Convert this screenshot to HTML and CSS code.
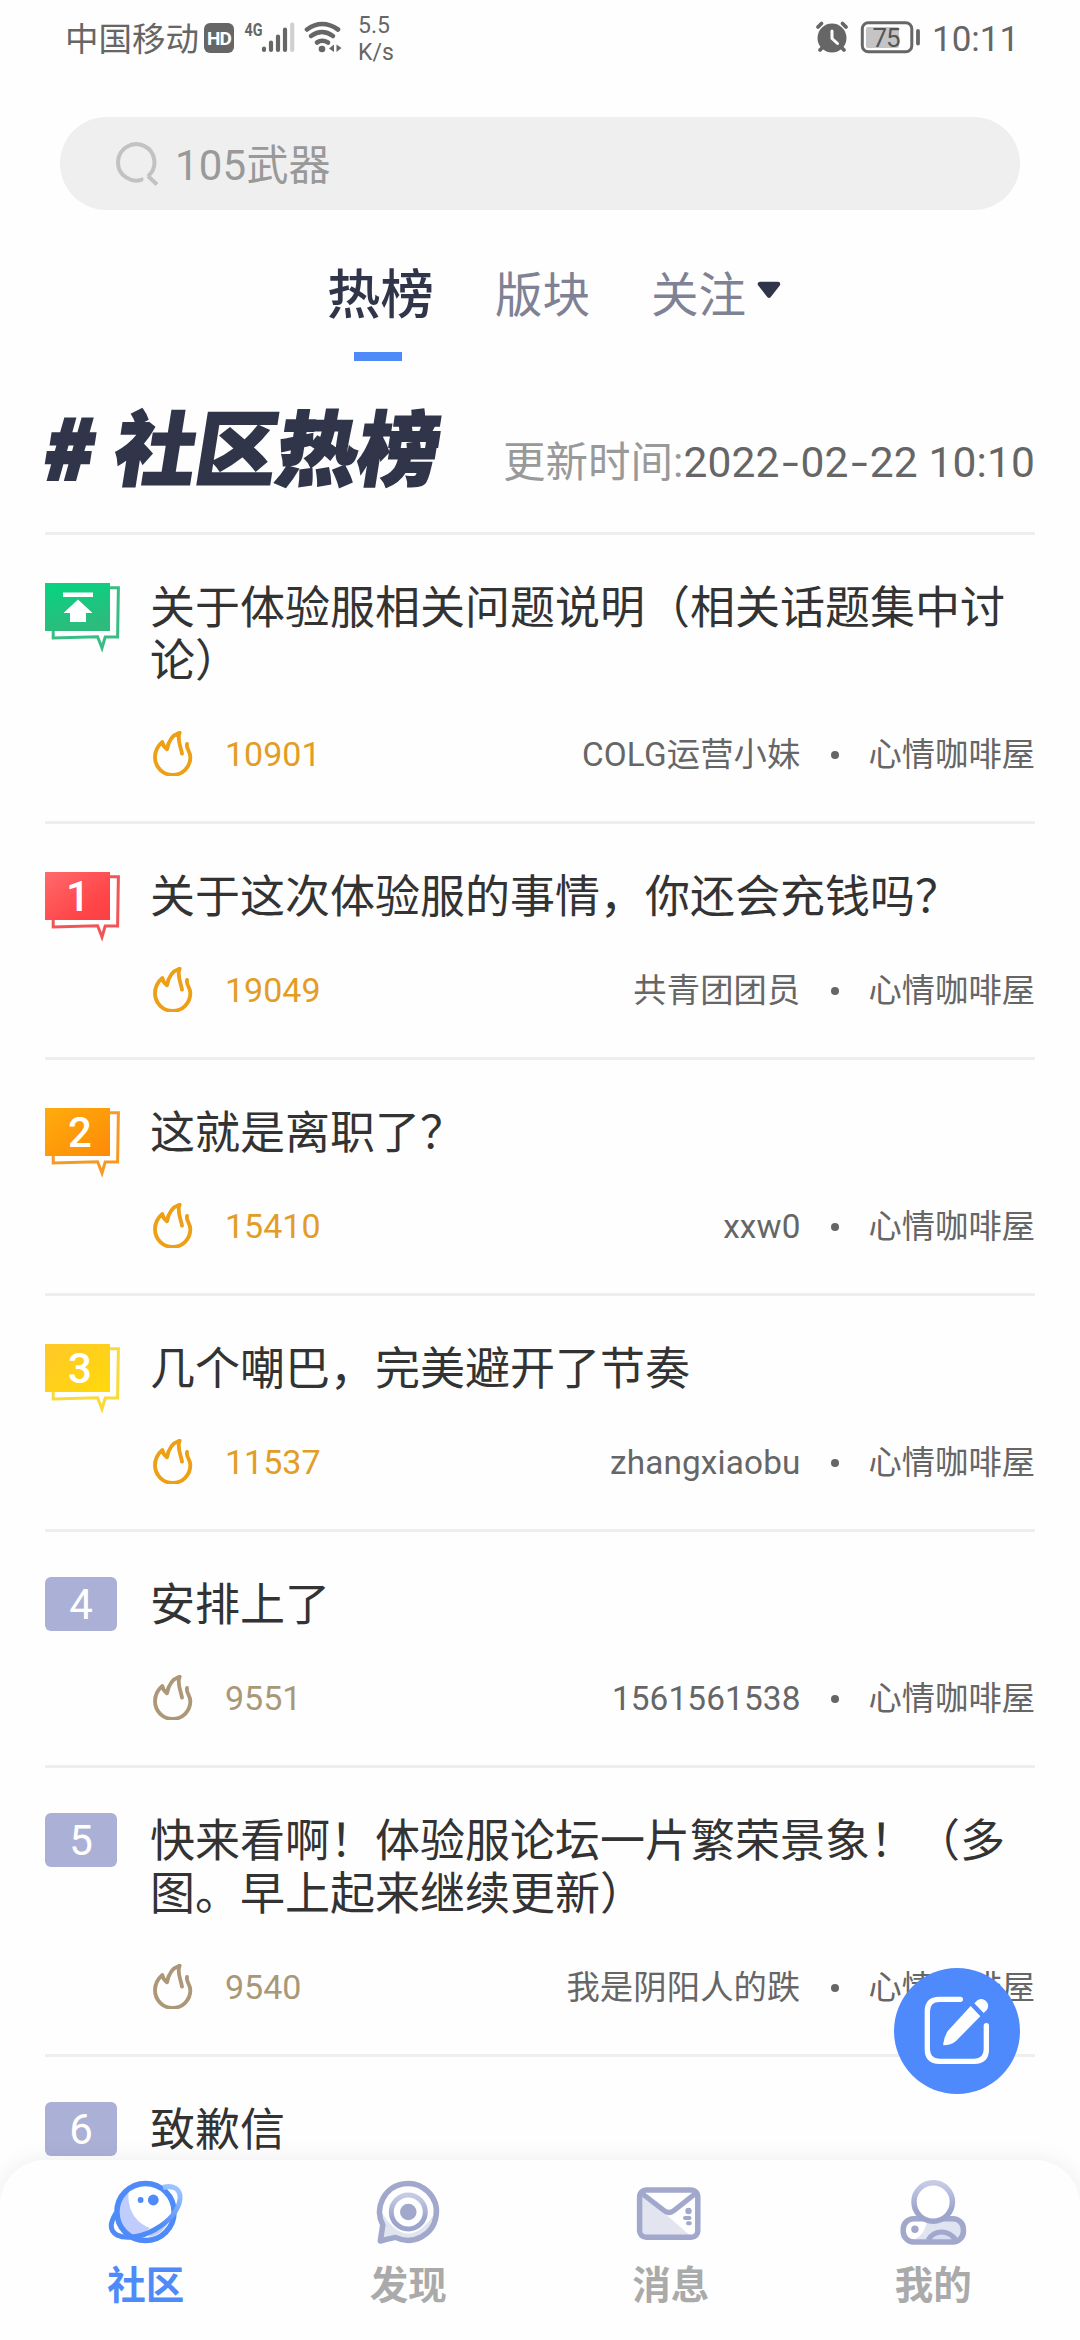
FILE: index.html
```html
<!DOCTYPE html>
<html lang="zh-CN">
<head>
<meta charset="utf-8">
<title>社区热榜</title>
<link rel="stylesheet" href="styles.css">
</head>
<body>
<svg class="defs" width="0" height="0" aria-hidden="true">
  <symbol id="flame" viewBox="393 93 135 135">
    <path d="M501 132 C498 148 511 152 511 172 A53 53 0 0 1 405 172 C405 152 413 138 427 126 C428 136 433 141 441 148 C445 125 457 105 479 98 C470 118 482 138 486 161" fill="none" stroke="currentColor" stroke-width="11.5" stroke-linecap="round" stroke-linejoin="round"/>
  </symbol>
  <symbol id="bubble" viewBox="0 0 76 70">
    <path d="M65 4.8 H73.4 L72.6 54 H60.2 L57 65 L52.6 53.7 L8.2 55 V47" fill="none" stroke="currentColor" stroke-width="3"/>
  </symbol>
</svg>
<div class="screen">
  <header class="status">
    <div class="status-left">
      <span class="carrier">中国移动</span>
      <span class="hd">HD</span>
      <svg class="signal" width="52" height="36" viewBox="243 19 52 36">
        <text class="net" x="244.5" y="35.5" textLength="18" lengthAdjust="spacingAndGlyphs">4G</text>
        <g stroke="#666" stroke-width="4.2" stroke-linecap="round">
          <path d="M264 48.5V50M271 42.500V50M278 36.500V50M285 29.500V50"/>
          <path d="M292.200 24.500V50" stroke="#d0d0d0"/>
        </g>
      </svg>
      <svg class="wifi" width="40" height="36" viewBox="302 19 40 36">
        <g fill="none" stroke="#666" stroke-width="4.600" stroke-linecap="round">
          <path d="M307 29.500Q322 18.500 338 29.500"/>
          <path d="M311 36Q322 28 333 36"/>
          <path d="M317 42.500Q322 39 328 42.500"/>
        </g>
        <circle cx="322" cy="49" r="3.300" fill="#666"/>
        <path d="M334 44.500v7.500l-5-3.500zM336.500 44.500l5 3.500-5 4z" fill="#666"/>
      </svg>
      <span class="speed">5.5<br>K/s</span>
    </div>
    <div class="status-right">
      <svg width="36" height="34" viewBox="815 20 36 34">
        <circle cx="833" cy="38" r="14.500" fill="#666"/>
        <path d="M819 27l3.500-3.500M847 27l-3.500-3.500M821 50l4-4M845 50l-4-4" stroke="#666" stroke-width="3.800" stroke-linecap="round"/>
        <path d="M833 31V38.500L838.500 43.500" fill="none" stroke="#fff" stroke-width="3" stroke-linecap="round" stroke-linejoin="round"/>
      </svg>
      <svg class="battery" width="62" height="34" viewBox="861 20 62 34">
        <rect x="863.300" y="22.800" width="49.500" height="29" rx="6" fill="none" stroke="#666" stroke-width="3"/>
        <rect x="867" y="27" width="33" height="21" rx="2" fill="#c4c4c4"/>
        <path d="M919 31V43.500" stroke="#666" stroke-width="3.800" stroke-linecap="round"/>
        <text x="873.500" y="47" textLength="28" class="charge">75</text>
      </svg>
      <span class="clock">10:11</span>
    </div>
  </header>

  <div class="search">
    <svg width="44" height="46" viewBox="114 141 44 46" fill="none" stroke="#c2c2c2" stroke-width="4">
      <path d="M143.500 179A18.200 18.200 0 1 1 148 176.200" />
      <path d="M148 176L157 184.500"/>
      <path d="M143.500 182L147 178.500" stroke="#efefef" stroke-width="3"/>
    </svg>
    <span>105武器</span>
  </div>

  <nav class="tabs">
    <span class="tab tab-on">热榜</span>
    <span class="tab">版块</span>
    <span class="tab">关注</span>
    <svg class="caret" width="24" height="18" viewBox="0 0 24 18"><path d="M3 3H21L12 14.500Z" fill="#30354a" stroke="#30354a" stroke-width="4.500" stroke-linejoin="round"/></svg>
  </nav>

  <div class="headline">
    <h1><span class="hash">#</span><span class="words">社区热榜</span></h1>
    <p>更新时间:<b>2022<i>-</i>02<i>-</i>22 10:10</b></p>
  </div>

  <main class="list">
    <article class="item">
      <div class="rank">
        <svg class="flag green" width="76" height="70">
          <defs><linearGradient id="g0" x1="0" y1="0" x2="0.300" y2="1"><stop stop-color="#06d481"/><stop offset="1" stop-color="#2cbb7c"/></linearGradient></defs>
          <use href="#bubble"/><rect width="65" height="48" fill="url(#g0)"/>
          <path d="M18 9.500H48V14H18ZM33 16.500L47.500 30H41V39H25V30H18.500Z" fill="#fff"/>
        </svg>
      </div>
      <div class="body">
        <h2>关于体验服相关问题说明（相关话题集中讨论）</h2>
        <div class="meta"><svg class="flame"><use href="#flame"/></svg><span class="heat">10901</span><span class="author">COLG运营小妹</span><span class="dot"></span><span>心情咖啡屋</span></div>
      </div>
    </article>
    <article class="item">
      <div class="rank">
        <svg class="flag red" width="76" height="70">
          <defs><linearGradient id="g1" x1="0" y1="0" x2="1" y2="1"><stop stop-color="#ff6a6c"/><stop offset="0.700" stop-color="#ff4548"/><stop offset="1" stop-color="#fb4043"/></linearGradient></defs>
          <use href="#bubble"/><rect width="65" height="48" fill="url(#g1)"/><text x="33" y="39">1</text>
        </svg>
      </div>
      <div class="body">
        <h2>关于这次体验服的事情，你还会充钱吗？</h2>
        <div class="meta"><svg class="flame"><use href="#flame"/></svg><span class="heat">19049</span><span class="author">共青团团员</span><span class="dot"></span><span>心情咖啡屋</span></div>
      </div>
    </article>
    <article class="item">
      <div class="rank">
        <svg class="flag orange" width="76" height="70">
          <defs><linearGradient id="g2" x1="0" y1="0" x2="1" y2="1"><stop stop-color="#ffac0c"/><stop offset="1" stop-color="#fd8a08"/></linearGradient></defs>
          <use href="#bubble"/><rect width="65" height="48" fill="url(#g2)"/><text x="35" y="39">2</text>
        </svg>
      </div>
      <div class="body">
        <h2>这就是离职了？</h2>
        <div class="meta"><svg class="flame"><use href="#flame"/></svg><span class="heat">15410</span><span class="author">xxw0</span><span class="dot"></span><span>心情咖啡屋</span></div>
      </div>
    </article>
    <article class="item">
      <div class="rank">
        <svg class="flag yellow" width="76" height="70">
          <defs><linearGradient id="g3" x1="0" y1="0" x2="1" y2="1"><stop stop-color="#ffc829"/><stop offset="1" stop-color="#ffd90b"/></linearGradient></defs>
          <use href="#bubble"/><rect width="65" height="48" fill="url(#g3)"/><text x="35" y="39">3</text>
        </svg>
      </div>
      <div class="body">
        <h2>几个嘲巴，完美避开了节奏</h2>
        <div class="meta"><svg class="flame"><use href="#flame"/></svg><span class="heat">11537</span><span class="author">zhangxiaobu</span><span class="dot"></span><span>心情咖啡屋</span></div>
      </div>
    </article>
    <article class="item cool">
      <div class="rank"><span class="num">4</span></div>
      <div class="body">
        <h2>安排上了</h2>
        <div class="meta"><svg class="flame"><use href="#flame"/></svg><span class="heat">9551</span><span class="author">1561561538</span><span class="dot"></span><span>心情咖啡屋</span></div>
      </div>
    </article>
    <article class="item cool">
      <div class="rank"><span class="num">5</span></div>
      <div class="body">
        <h2>快来看啊！体验服论坛一片繁荣景象！（多图。早上起来继续更新）</h2>
        <div class="meta"><svg class="flame"><use href="#flame"/></svg><span class="heat">9540</span><span class="author">我是阴阳人的跌</span><span class="dot"></span><span>心情咖啡屋</span></div>
      </div>
    </article>
    <article class="item cool">
      <div class="rank"><span class="num">6</span></div>
      <div class="body"><h2>致歉信</h2></div>
    </article>
  </main>

  <button class="fab" aria-label="发帖">
    <svg width="126" height="126" viewBox="12 12 378 378">
      <path d="M211 106H148Q112 106 112 142V256Q112 292 148 292H253Q289 292 289 256V185" fill="none" stroke="#fff" stroke-width="16" stroke-linecap="round"/>
      <path d="M242 126L271 157L198 231Q182 244 161 244Q159 243 160 238Q163 216 174 200Z" fill="#fff"/>
      <path d="M253 118L263 109Q275 100 287 110Q300 123 291 137L281 147Z" fill="#fff"/>
    </svg>
  </button>

  <footer class="nav">
    <div class="nav-item nav-on">
      <svg width="80" height="72" viewBox="0 0 80 72" fill="none">
        <defs><linearGradient id="ring" x1="0.900" y1="0" x2="0.550" y2="0.700"><stop stop-color="#9cc4ff"/><stop offset="1" stop-color="#4f8bf8"/></linearGradient></defs>
        <circle cx="39.500" cy="36" r="28.600" fill="#fff"/>
        <path d="M22.500 15C21 34 30 47 44 52Q36 60 27 61C8 51 8 27 22.500 15Z" fill="#bfcdfd"/>
        <path d="M46 57Q57 52 63 45Q56 60 42 61Z" fill="#bfcdfd"/>
        <circle cx="39.500" cy="36" r="28.600" stroke="#4f8bf8" stroke-width="5.500"/>
        <path d="M57 11.500C66 9 75 12 74 23C72.500 35 62 46 49 53.500C36 61 20 63.500 11 59C3 54.500 4 47 10 37" stroke="url(#ring)" stroke-width="5"/>
        <circle cx="34.600" cy="24" r="2.900" fill="#4f8bf8"/><circle cx="47.300" cy="24" r="5.400" fill="#4f8bf8"/>
      </svg>
      <span>社区</span>
    </div>
    <div class="nav-item">
      <svg width="80" height="72" viewBox="0 0 80 72" fill="none">
        <defs><linearGradient id="lens" x1="0" y1="0" x2="0" y2="1"><stop stop-color="#c6cce6"/><stop offset="0.700" stop-color="#9da5cc"/></linearGradient></defs>
        <path d="M13 37Q39 78 66 37Q62 63 39 64L25 62L11 65L14 49Z" fill="#e0e4ee"/>
        <path d="M13.800 49A28.400 28.400 0 1 1 26.500 61.400Q18 63 11.300 65Z" stroke="#a1a8cc" stroke-width="5.500" stroke-linejoin="round"/>
        <circle cx="39.300" cy="36" r="17" fill="#fff" stroke="url(#lens)" stroke-width="5"/>
        <circle cx="39.300" cy="36" r="8.300" fill="#a1a8cc"/>
      </svg>
      <span>发现</span>
    </div>
    <div class="nav-item">
      <svg width="80" height="72" viewBox="0 0 80 72" fill="none">
        <path d="M9 16L62 62H9Z" fill="#e2e5f0"/>
        <rect x="8.600" y="14" width="58.200" height="47.200" rx="6.500" stroke="#a1a8cc" stroke-width="5.500"/>
        <path d="M12 18L33 34.500Q38 38.500 43 34.500L63.500 18Z" fill="#fff"/>
        <path d="M11 17.500L33 34.500Q38 38.500 43 34.500L64.500 17.500" stroke="#a1a8cc" stroke-width="5.200"/>
        <circle cx="57.500" cy="35" r="3.200" fill="#a1a8cc"/>
        <path d="M54 42H58.500M57 47.200H58.800" stroke="#a1a8cc" stroke-width="4" stroke-linecap="round"/>
      </svg>
      <span>消息</span>
    </div>
    <div class="nav-item">
      <svg width="80" height="72" viewBox="0 0 80 72" fill="none">
        <rect x="9.200" y="42.700" width="60.200" height="23.300" rx="10.500" fill="#e0e4f0"/>
        <path d="M20 43H33Q32 58 20 64Q10 64 10 54T20 43Z" fill="#fff"/>
        <path d="M34 64Q39 56 47.500 56T62 64" fill="#d6dcf2" stroke="#a1a8cc" stroke-width="5"/>
        <rect x="9.200" y="42.700" width="60.200" height="23.300" rx="10.500" stroke="#a1a8cc" stroke-width="5.500"/>
        <circle cx="39.200" cy="26" r="19.200" fill="#fff" stroke="url(#lens)" stroke-width="5.500"/>
        <circle cx="20.900" cy="53.300" r="3.700" fill="#a1a8cc"/>
      </svg>
      <span>我的</span>
    </div>
  </footer>
</div>
</body>
</html>
```

FILE: styles.css
```css
* { box-sizing: border-box; margin: 0; padding: 0; }
body {
  font-family: Roboto, "Noto Sans CJK SC", sans-serif;
  background: #fff;
  color: #333;
  text-spacing-trim: space-all;
}
svg { display: block; flex: none; }
.defs { position: absolute; }
.screen {
  position: relative;
  width: 1080px;
  height: 2340px;
  overflow: hidden;
  background: #fefefe;
  display: flex;
  flex-direction: column;
}

.status {
  height: 78px;
  flex: none;
  display: flex;
  justify-content: space-between;
  padding: 0 64px 0 65px;
  color: #666;
}
.status-left, .status-right { display: flex; align-items: center; }
.carrier { font-size: 33.5px; line-height: 78px; width: 139px; padding-top: 1px; }
.hd {
  width: 30px;
  height: 30px;
  margin-top: -2px;
  border-radius: 6px;
  background: #666;
  color: #fff;
  font-size: 19px;
  font-weight: 700;
  line-height: 31px;
  text-align: center;
  letter-spacing: -1px;
}
.signal { margin: -4px 0 0 9px; }
.wifi { margin: -4px 0 0 7px; }
.net { font-size: 18px; font-weight: 700; fill: #666; }
.speed { font-size: 23px; line-height: 27px; margin-left: 16px; }
.status-right svg { margin-top: -4px; }
.status-right .battery { margin-left: 10px; }
.charge { font-size: 26px; fill: #555; }
.clock { font-size: 35px; width: 84px; margin-left: 10px; }

.search {
  flex: none;
  margin: 39px 60px 0;
  height: 93px;
  border-radius: 47px;
  background: #efefef;
  display: flex;
  align-items: center;
  gap: 17px;
  padding-left: 54px;
  color: #999;
  font-size: 42px;
}
.search span { letter-spacing: .2px; padding-bottom: 5px; }

.tabs {
  flex: none;
  height: 168px;
  display: flex;
  align-items: center;
  padding-left: 327px;
  color: #7e8294;
  font-size: 47.5px;
}
.tab { line-height: 164px; padding-top: 4px; margin-right: 61px; }
.tab:nth-of-type(3) { margin-right: 11px; }
.tab-on {
  font-size: 53.500px;
  color: #30354a;
  font-weight: 500;
  background: linear-gradient(#4f8bf8, #4f8bf8) 27px 142px / 48px 9px no-repeat;
}
.caret { margin-top: -8px; }

.headline {
  flex: none;
  height: 154px;
  margin: 0 45px;
  display: flex;
  justify-content: space-between;
}
.headline h1 {
  display: flex;
  font-family: "Noto Sans CJK SC", sans-serif;
  font-weight: 900;
  color: #30354a;
  font-size: 81px;
  line-height: 100px;
  padding-top: 16px;
  transform: skewX(-9deg);
}
.hash { width: 70px; font-size: 80px; -webkit-text-stroke: 4px #30354a; }
.words { -webkit-text-stroke: 2px #30354a; }
.headline p { font-size: 42.500px; line-height: 60px; padding-top: 55px; color: #999; }
.headline b { font-weight: 400; color: #666; letter-spacing: .15px; }
.headline i { display: inline-block; font-style: normal; width: 21px; text-align: center; transform: scaleX(1.400); }

.list { flex: none; margin: 0 45px; border-top: 3px solid #eee; }
.item { display: grid; grid-template-columns: 106px 1fr; border-bottom: 3px solid #eee; padding: 45px 0; }
.flag { margin-top: 3px; height: 70px; margin-bottom: -20px; }
.flag text { font: 500 42px Roboto, sans-serif; fill: #fff; text-anchor: middle; }
.green { color: #38bd85; }
.red { color: #f25557; }
.orange { color: #f79a25; }
.yellow { color: #f8da38; }
.num {
  display: block;
  width: 72px;
  height: 54px;
  border-radius: 6px;
  background: #abb1d6;
  color: #fff;
  font-size: 42px;
  line-height: 55px;
  text-align: center;
}
.item h2 { font-size: 45px; line-height: 53px; font-weight: 400; color: #333; padding-top: 2px; margin-left: -1px; }
.meta {
  height: 45px;
  margin-top: 43px;
  display: flex;
  align-items: center;
  font-size: 33.300px;
  line-height: 43px;
  color: #666;
}
.meta span:not(.dot) { padding-top: 2px; }
.flame { width: 45px; height: 45px; color: #ed9f16; }
.heat { margin-left: 29px; font-size: 34px; color: #e39d24; }
.cool .flame { color: #ac9878; }
.cool .heat { color: #a99878; }
.author { margin-left: auto; letter-spacing: .15px; }
.dot { width: 8px; height: 8px; border-radius: 50%; background: #666; margin: 2px 30px 0 30px; }

.fab {
  position: absolute;
  left: 894px;
  top: 1968px;
  width: 126px;
  height: 126px;
  border: 0;
  border-radius: 50%;
  background: #4f8afc;
}
.nav {
  position: absolute;
  left: 0;
  right: 0;
  bottom: 0;
  height: 180px;
  display: flex;
  padding: 16px 15px 0;
  background: #fefefe;
  border-radius: 45px 45px 0 0;
  box-shadow: 0 0 24px rgba(0, 0, 0, .07);
}
.nav-item {
  flex: 1;
  display: flex;
  flex-direction: column;
  align-items: center;
  color: #aaa;
  font-size: 38.500px;
  font-weight: 700;
}
.nav-item span { margin-top: 15px; line-height: 46px; margin-right: 1px; }
.nav-on { color: #4f8bf8; }
```
